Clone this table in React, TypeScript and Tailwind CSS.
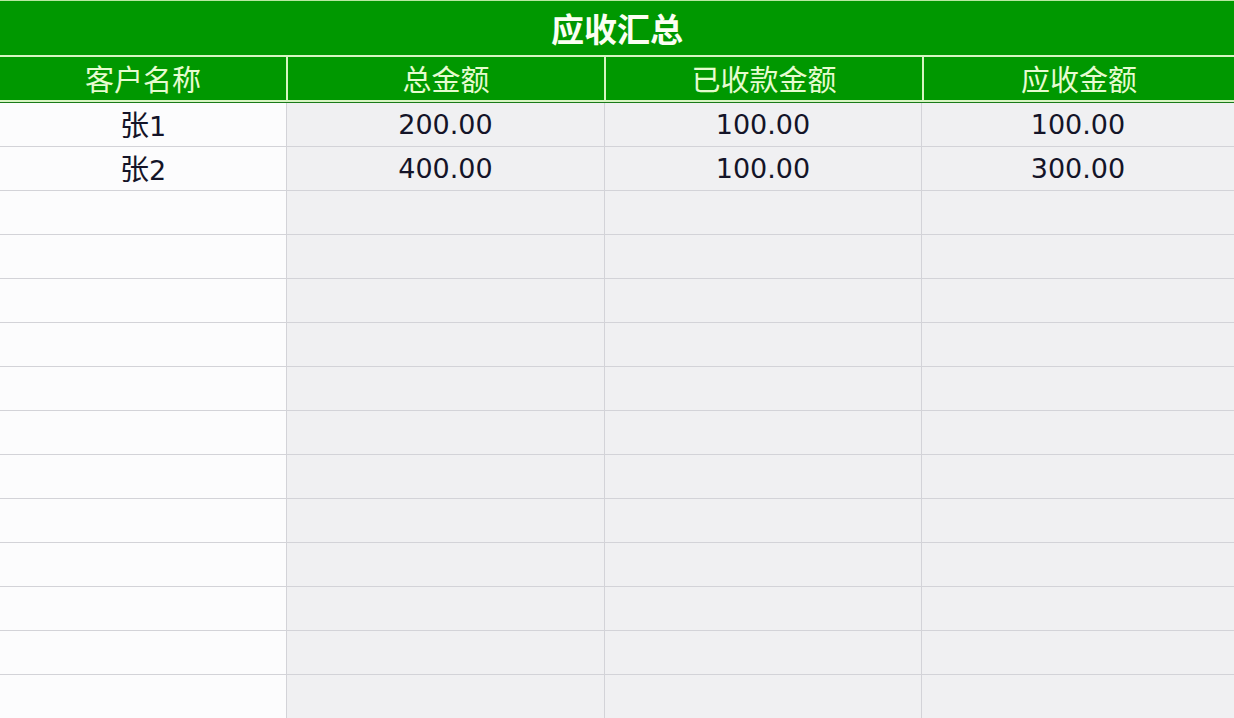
import React from "react";

const rows: [string, string, string, string][] = [
  ["张1", "200.00", "100.00", "100.00"],
  ["张2", "400.00", "100.00", "300.00"],
];
const empty = Array.from({ length: 12 }, () => ["", "", "", ""] as [string, string, string, string]);

function Cell({ text }: { text: string }) {
  if (text.startsWith("张")) {
    return (
      <span>
        <span className="text-[29px]" style={{ fontFamily: '"Noto Sans CJK SC", sans-serif' }}>张</span>
        {text.slice(1)}
      </span>
    );
  }
  return <span>{text}</span>;
}

export default function App() {
  const all = [...rows, ...empty];
  const font = { fontFamily: '"Noto Sans CJK SC", "Noto Sans", sans-serif' };
  const dataFont = { fontFamily: '"DejaVu Sans", "Noto Sans CJK SC", sans-serif' };
  return (
    <div className="w-[1234px] h-[718px] overflow-hidden bg-white" style={font}>
      <div className="h-[55px] bg-[#009800] border-t border-[#b8e8a0] flex items-center justify-center text-[33px] font-bold text-[#fbfff2] leading-none">
        应收汇总
      </div>
      <div className="h-[2px] bg-[#d6f5c2]" />
      <div className="grid grid-cols-[286px_316px_316px_1fr] h-[45px] bg-[#d6f5c2] gap-x-[2px] border-b-2 border-[#d6f5c2]">
        {["客户名称", "总金额", "已收款金额", "应收金额"].map((h) => (
          <div key={h} className="bg-[#009800] flex items-center justify-center text-[29px] text-[#e6fcd0] leading-none">
            {h}
          </div>
        ))}
      </div>
      <div className="h-px bg-[#1a7a1a]" />
      <div className="grid grid-cols-[287px_318px_317px_1fr]" style={dataFont}>
        {all.map((r, i) =>
          r.map((c, j) => (
            <div
              key={i + "-" + j}
              className={
                "h-[44px] flex items-center justify-center text-[27px] leading-none text-[#141428] border-b border-[#d3d3d8] " +
                (j < 3 ? "border-r " : "") +
                (j === 0 ? "bg-[#fcfcfd]" : "bg-[#f0f0f2]")
              }
            >
              <Cell text={c} />
            </div>
          ))
        )}
      </div>
    </div>
  );
}
